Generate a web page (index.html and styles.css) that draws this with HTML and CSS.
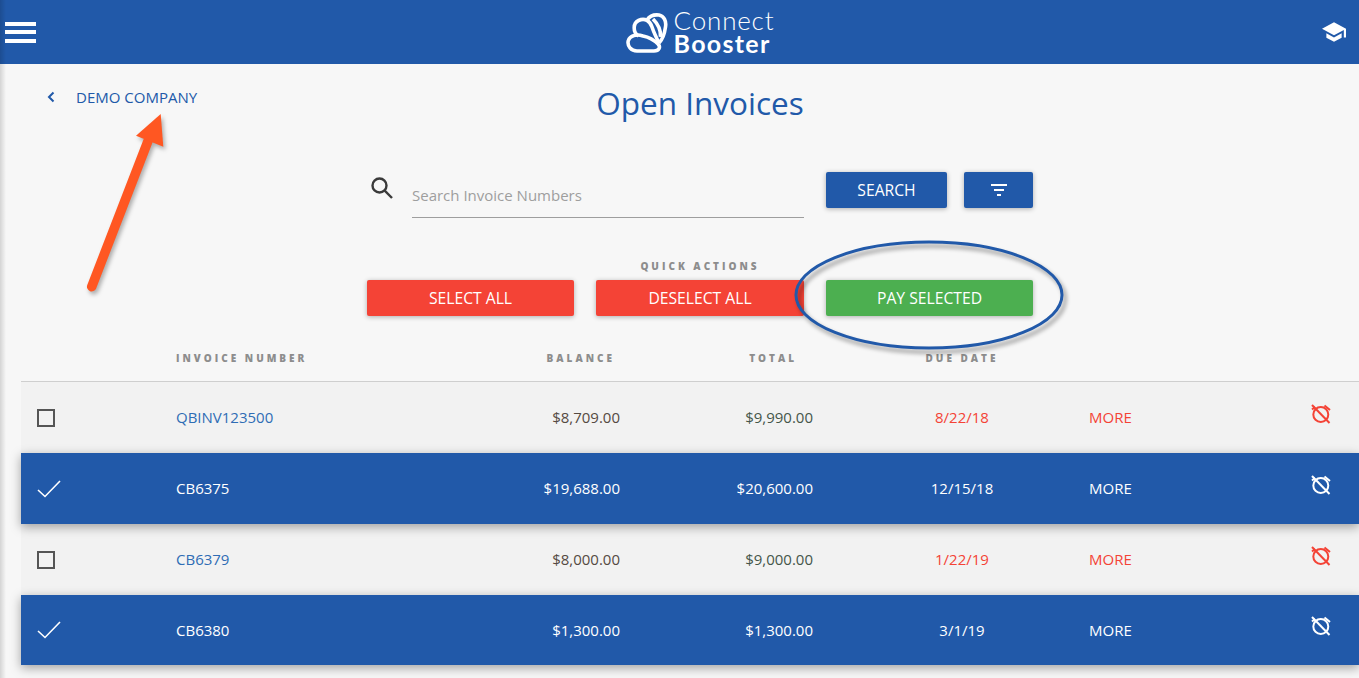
FILE: index.html
```html
<!DOCTYPE html>
<html lang="en">
<head>
<meta charset="utf-8">
<title>Open Invoices</title>
<link rel="stylesheet" href="styles.css">
</head>
<body>
<header class="topbar">
  <button class="burger" aria-label="Menu"><span></span><span></span><span></span></button>
  <div class="logo">
    <svg class="logo-mark" viewBox="0 0 42 40" width="42" height="40" fill="none" stroke="#fff" stroke-width="3.600">
      <path d="M21 7 C24 2.500 29 1.500 33 2 C38 3 40.500 8 39.500 14 C38.500 21 36 27 33 30"/>
      <path d="M12.500 23 C6.500 19 7 10 12.500 7.500 C19 4.500 24 8 26 14 C28 20 31 26 33 30"/>
      <path d="M27 6 C32 11 35 18 34.500 24"/>
      <path d="M17 23 C11 21 4 22 2.200 28 C1.200 33 5 38 11 38 L28 38 C33 38 35 34 32 31 C28 27 22 24 17 23 Z"/>
    </svg>
    <div class="logo-text"><span class="logo-top">Connect</span><span class="logo-bottom">Booster</span></div>
  </div>
  <svg class="cap" viewBox="1 3 22 18" width="24" height="20"><path fill="#fff" d="M12 3 L1 9 L12 15 L21 10.090 V17 H23 V9 Z M5 13.180 V17.180 L12 21 L19 17.180 V13.180 L12 17 Z"/></svg>
</header>

<main class="page">
  <div class="heading">
    <a class="back" href="#">
      <svg viewBox="0 0 8 12" width="8" height="12" fill="none" stroke="#2159a9" stroke-width="2"><path d="M6.500 1.500 L2 6 L6.500 10.500"/></svg>
      <span>DEMO COMPANY</span>
    </a>
    <h1>Open Invoices</h1>
  </div>

  <div class="controls">
    <div class="search-row">
      <svg class="search-icon" viewBox="0 0 24 24" width="24" height="24" fill="none" stroke="#3a3a3a" stroke-width="2.400"><circle cx="9.500" cy="9.500" r="7"/><path d="M14.700 14.700 L22 22"/></svg>
      <div class="search-field">Search Invoice Numbers</div>
      <button class="btn btn-blue btn-search">SEARCH</button>
      <button class="btn btn-blue btn-filter" aria-label="Filter">
        <svg viewBox="0 0 16 12" width="16" height="12" fill="#fff"><rect x="0" y="0" width="16" height="2"/><rect x="3" y="5" width="10" height="2"/><rect x="6" y="10" width="4" height="2"/></svg>
      </button>
    </div>
    <div class="quick-label">QUICK ACTIONS</div>
    <div class="quick-row">
      <button class="btn btn-red">SELECT ALL</button>
      <button class="btn btn-red">DESELECT ALL</button>
      <button class="btn btn-green">PAY SELECTED</button>
    </div>
  </div>

  <section class="table">
    <div class="row head">
      <span></span><span>INVOICE NUMBER</span><span class="num head-bal">BALANCE</span><span class="num head-tot">TOTAL</span><span class="date">DUE DATE</span><span></span><span></span>
    </div>
    <div class="row item">
      <i class="box"></i><a class="inv" href="#">QBINV123500</a><span class="num bal">$8,709.00</span><span class="num tot">$9,990.00</span><span class="date late">8/22/18</span><span class="more">MORE</span>
      <svg class="alarm" viewBox="0 0 20 20" width="20" height="20"><use href="#alarm-off"/></svg>
    </div>
    <div class="row item on">
      <svg class="tick" viewBox="0 0 24 18" width="24" height="18"><path d="M1 10 L8 16.500 L23 1" fill="none" stroke="#fff" stroke-width="1.600"/></svg><a class="inv" href="#">CB6375</a><span class="num">$19,688.00</span><span class="num">$20,600.00</span><span class="date">12/15/18</span><span class="more">MORE</span>
      <svg class="alarm" viewBox="0 0 20 20" width="20" height="20"><use href="#alarm-off"/></svg>
    </div>
    <div class="row item">
      <i class="box"></i><a class="inv" href="#">CB6379</a><span class="num bal">$8,000.00</span><span class="num tot">$9,000.00</span><span class="date late">1/22/19</span><span class="more">MORE</span>
      <svg class="alarm" viewBox="0 0 20 20" width="20" height="20"><use href="#alarm-off"/></svg>
    </div>
    <div class="row item on last">
      <svg class="tick" viewBox="0 0 24 18" width="24" height="18"><path d="M1 10 L8 16.500 L23 1" fill="none" stroke="#fff" stroke-width="1.600"/></svg><a class="inv" href="#">CB6380</a><span class="num">$1,300.00</span><span class="num">$1,300.00</span><span class="date">3/1/19</span><span class="more">MORE</span>
      <svg class="alarm" viewBox="0 0 20 20" width="20" height="20"><use href="#alarm-off"/></svg>
    </div>
  </section>
</main>

<svg class="defs" width="0" height="0">
  <symbol id="alarm-off" viewBox="0 0 20 20">
    <g fill="none" stroke="currentColor" stroke-width="2">
      <circle cx="9.800" cy="10.500" r="7.500"/>
      <path d="M1 1 L18.500 19"/>
      <path d="M13.500 1.500 L19 6 M1 5.500 L4 3"/>
    </g>
  </symbol>
</svg>

<svg class="annot annot-arrow" viewBox="0 0 100 200" width="100" height="200">
  <path d="M9.700 176.700 L66 31" fill="none" stroke="#ff5722" stroke-width="9.500" stroke-linecap="round"/>
  <path d="M78.700 4 L81.300 36.700 L54 25.700 Z" fill="#ff5722"/>
</svg>
<svg class="annot annot-oval" viewBox="0 0 290 130" width="290" height="130">
  <ellipse cx="143" cy="60" rx="133" ry="53" fill="none" stroke="#2159a9" stroke-width="3"/>
</svg>
</body>
</html>
```

FILE: styles.css
```css
* { box-sizing: border-box; }
html, body { margin: 0; height: 100%; }
body {
  width: 1359px;
  height: 678px;
  overflow: hidden;
  position: relative;
  background: #f7f7f7;
  font-family: "Open Sans", "Noto Sans", sans-serif;
  font-size: 15px;
  color: #333;
}
body::after {
  content: "";
  position: absolute;
  left: 0; top: 0; bottom: 0;
  width: 6px;
  background: linear-gradient(to right, rgba(0,0,0,.14), rgba(0,0,0,0));
  pointer-events: none;
}
button { font-family: inherit; border: 0; padding: 0; cursor: pointer; }
a { text-decoration: none; color: inherit; }

.topbar {
  height: 64px;
  background: #2159a9;
  display: grid;
  grid-template-columns: 1fr auto 1fr;
  align-items: center;
  padding: 0 13px 0 5px;
}
.burger {
  width: 31px;
  display: flex;
  flex-direction: column;
  gap: 4.5px;
  background: none;
  justify-self: start;
}
.burger span { display: block; height: 4px; background: #fff; }
.logo { display: flex; align-items: center; gap: 6px; margin-left: 49px; }
.logo-mark { margin-top: 2px; }
.logo-text { display: flex; flex-direction: column; color: #fff; font-family: Lato, sans-serif; }
.logo-top { font-weight: 300; font-size: 26px; line-height: 23px; letter-spacing: .8px; }
.logo-bottom { font-weight: 700; font-size: 25px; line-height: 23px; letter-spacing: 1.3px; }
.cap { justify-self: end; }

.page { display: flex; flex-direction: column; }

.heading {
  display: grid;
  grid-template-columns: 1fr auto 1fr;
  padding: 19px 6px 0 47px;
  height: 92px;
}
.heading h1 {
  grid-column: 2;
  grid-row: 1;
  margin: 0;
  font-weight: 400;
  font-size: 31.5px;
  line-height: 40px;
  color: #2159a9;
}
.back {
  grid-column: 1;
  grid-row: 1;
  display: flex;
  align-items: center;
  gap: 21px;
  height: 26px;
  margin-top: 1px;
  color: #2159a9;
  font-size: 15px;
}

.controls { width: 666px; margin-left: 367px; }
.search-row { display: flex; align-items: flex-start; padding-left: 3px; height: 64px; margin-top: 16px; }
.search-icon { margin-top: 4px; flex: none; }
.search-field {
  width: 392px;
  height: 46px;
  margin-left: 18px;
  margin-right: 22px;
  border-bottom: 1px solid #9e9e9e;
  color: #9e9e9e;
  font-size: 15px;
  line-height: 46px;
}
.btn {
  display: flex;
  align-items: center;
  justify-content: center;
  height: 36px;
  border-radius: 2px;
  color: #fff;
  font-size: 15.7px;
  box-shadow: 0 1px 5px rgba(0,0,0,.3);
}
.btn-blue { background: #2159a9; }
.btn-red { background: #f44336; }
.btn-green { background: #4caf50; }
.btn-search { width: 121px; flex: none; }
.btn-filter { width: 69px; flex: none; margin-left: 17px; }

.quick-label {
  margin-top: 22px;
  text-align: center;
  font-size: 10px;
  font-weight: 800;
  line-height: 16px;
  letter-spacing: 3px;
  color: #8d8d8d;
}
.quick-row { display: grid; grid-template-columns: 207px 208px 207px; gap: 22px; margin-top: 6px; }

.table { margin: 24px 0 0 21px; display: flex; flex-direction: column; }
.row {
  display: grid;
  grid-template-columns: 139px 244px 200px 193px 276px 222px 20px;
  align-items: center;
  padding-left: 16px;
}
.num { text-align: right; }
.date { text-align: center; padding-left: 22px; }
.head {
  height: 42px;
  padding-bottom: 6px;
  border-bottom: 1px solid #cfcfcf;
  font-size: 10px;
  font-weight: 800;
  letter-spacing: 3px;
  color: #8d8d8d;
}
.head-bal { padding-right: 5px; }
.head-tot { padding-right: 16px; }
.item {
  height: 71px;
  background: #f2f2f2;
  position: relative;
  color: #333;
}
.item > span, .item > a { margin-bottom: 2px; }
.item.last { height: 70px; }
.item.last > span, .item.last > a { margin-bottom: 0; }
.inv { color: #2f6db5; }
.bal { color: #554a42; }
.tot { color: #45564a; }
.late, .item .more, .item .alarm { color: #f44336; }
.box { display: block; width: 18px; height: 18px; border: 2px solid #555; }
.tick { display: block; }
.alarm { margin-top: -8px; }
.item.on {
  background: #2159a9;
  color: #fff;
  z-index: 1;
  box-shadow: 0 3px 10px rgba(0,0,0,.35);
}
.on .inv, .on .more, .on .alarm { color: #fff; }
.defs { position: absolute; }

.annot { position: absolute; overflow: visible; pointer-events: none; z-index: 5; }
.annot-arrow { left: 82px; top: 110px; filter: drop-shadow(2px 3px 2px rgba(0,0,0,.3)); }
.annot-oval { left: 786px; top: 235px; filter: drop-shadow(3px 4px 2px rgba(0,0,0,.4)); }
```
